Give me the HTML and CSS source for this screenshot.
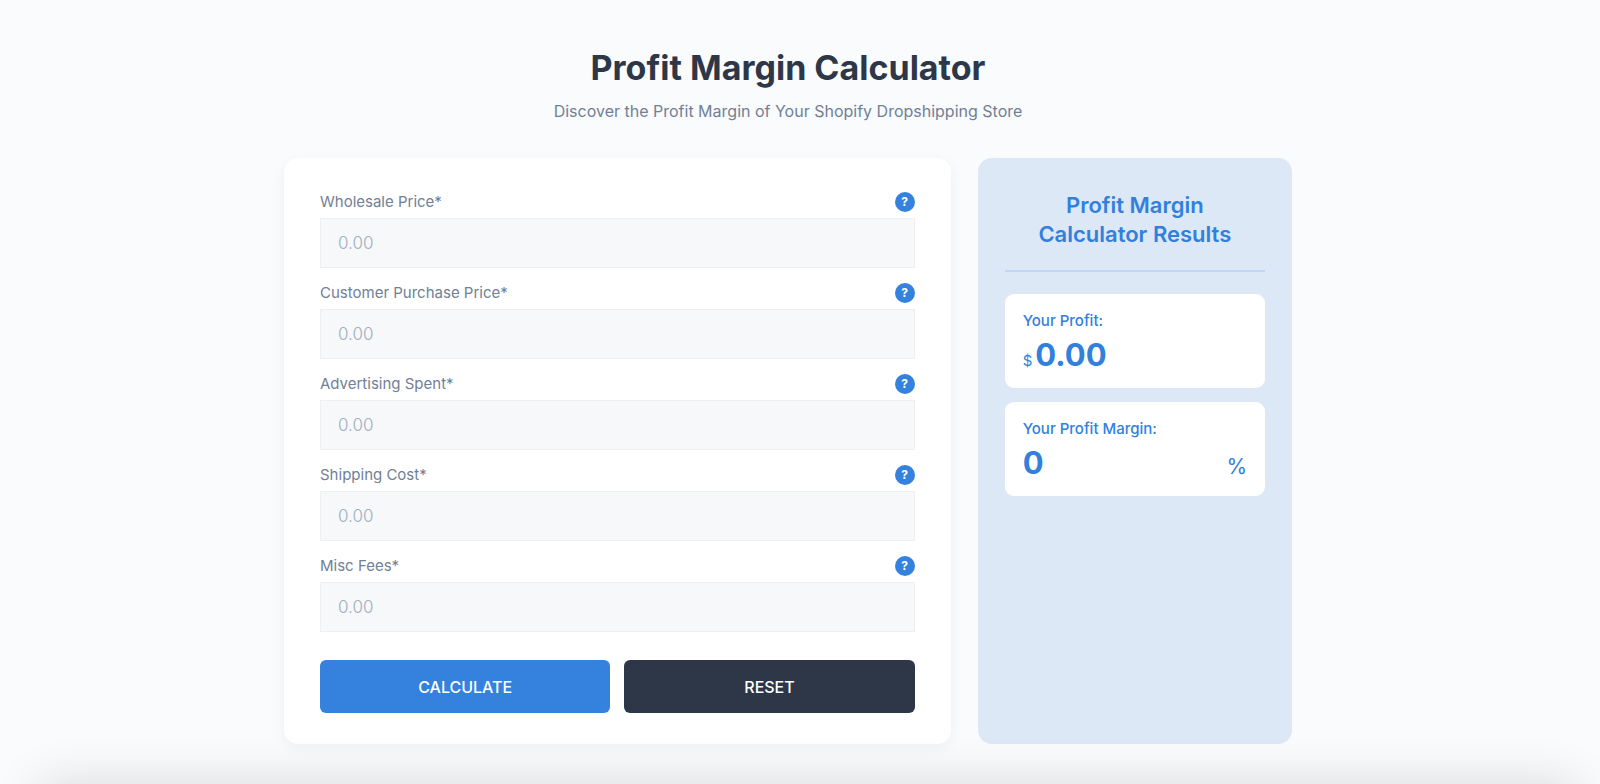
FILE: index.html
```html
<!DOCTYPE html>
<html lang="en">
<head>
<meta charset="utf-8">
<meta name="viewport" content="width=device-width, initial-scale=1">
<title>Profit Margin Calculator</title>
<link rel="stylesheet" href="styles.css">
</head>
<body>
<main class="page">
  <header class="intro">
    <h1 class="title">Profit Margin Calculator</h1>
    <p class="subtitle">Discover the Profit Margin of Your Shopify Dropshipping Store</p>
  </header>
  <div class="calculator">
    <form class="form-card">
      <div class="field">
        <div class="field-head"><label for="wholesale">Wholesale Price*</label><button type="button" class="help">?</button></div>
        <input class="amount" id="wholesale" type="text" inputmode="decimal" placeholder="0.00">
      </div>
      <div class="field">
        <div class="field-head"><label for="purchase">Customer Purchase Price*</label><button type="button" class="help">?</button></div>
        <input class="amount" id="purchase" type="text" inputmode="decimal" placeholder="0.00">
      </div>
      <div class="field">
        <div class="field-head"><label for="advertising">Advertising Spent*</label><button type="button" class="help">?</button></div>
        <input class="amount" id="advertising" type="text" inputmode="decimal" placeholder="0.00">
      </div>
      <div class="field">
        <div class="field-head"><label for="shipping">Shipping Cost*</label><button type="button" class="help">?</button></div>
        <input class="amount" id="shipping" type="text" inputmode="decimal" placeholder="0.00">
      </div>
      <div class="field">
        <div class="field-head"><label for="fees">Misc Fees*</label><button type="button" class="help">?</button></div>
        <input class="amount" id="fees" type="text" inputmode="decimal" placeholder="0.00">
      </div>
      <div class="actions">
        <button type="button" class="button button-primary">CALCULATE</button>
        <button type="reset" class="button button-dark">RESET</button>
      </div>
    </form>
    <section class="results">
      <h2 class="results-title">Profit Margin Calculator Results</h2>
      <div class="result">
        <h3 class="result-label">Your Profit:</h3>
        <p class="result-value"><span class="currency">$</span><output class="number">0.00</output></p>
      </div>
      <div class="result">
        <h3 class="result-label">Your Profit Margin:</h3>
        <p class="result-value result-split"><output class="number">0</output><span class="percent">%</span></p>
      </div>
    </section>
  </div>
</main>
</body>
</html>
```

FILE: styles.css
```css
* {
  box-sizing: border-box;
}

body {
  margin: 0;
  background: #f9fbfd;
  color: #2d3748;
  font-family: Inter, "Liberation Sans", sans-serif;
}

h1, h2, h3, p {
  margin: 0;
}

.page {
  position: relative;
  min-height: 100vh;
  padding: 44px 24px 40px 0;
  overflow: hidden;
}

.page::after {
  content: "";
  position: absolute;
  top: 100%;
  left: 40px;
  right: 24px;
  height: 60px;
  box-shadow: 0 0 50px rgba(0, 0, 0, 0.14);
}

.intro {
  text-align: center;
}

.title {
  font-size: 34px;
  line-height: 48px;
  font-weight: 700;
}

.subtitle {
  margin-top: 7px;
  color: #718096;
  font-size: 16px;
  line-height: 24px;
}

.calculator {
  display: grid;
  grid-template-columns: 666fr 314fr;
  gap: 27px;
  max-width: 1008px;
  margin: 35px auto 0;
}

.form-card {
  display: flex;
  flex-direction: column;
  gap: 15px;
  padding: 34px 36px 31px;
  border-radius: 14px;
  background: #fff;
  box-shadow: 0 4px 14px rgba(45, 55, 72, 0.05);
}

.field-head {
  display: flex;
  align-items: center;
  justify-content: space-between;
  margin-bottom: 6px;
  color: #718096;
  font-size: 15px;
  line-height: 20px;
}

.help {
  width: 20px;
  height: 20px;
  padding: 0;
  border: 0;
  border-radius: 50%;
  background: #3482dd;
  color: #fff;
  font: 700 12px/20px Inter, sans-serif;
}

.amount {
  display: block;
  width: 100%;
  height: 50px;
  padding: 0 17px;
  border: 1px solid #edeff1;
  border-radius: 0;
  background: #f7f8fa;
  color: #2d3748;
  font: 300 17px Inter, sans-serif;
}

.amount::placeholder {
  color: #a0aec0;
  opacity: 1;
}

.actions {
  display: grid;
  grid-template-columns: 1fr 1fr;
  gap: 14px;
  margin-top: 13px;
}

.button {
  height: 53px;
  border: 0;
  border-radius: 6px;
  color: #fff;
  font: 500 16px Inter, sans-serif;
}

.button-primary {
  background: #3482dd;
}

.button-dark {
  background: #2d3748;
}

.results {
  padding: 33px 27px;
  border-radius: 14px;
  background: #dce8f6;
  color: #3180de;
}

.results-title {
  margin-bottom: 22px;
  padding: 0 27px 21px;
  border-bottom: 2px solid #c1d7f1;
  font-size: 22px;
  line-height: 29px;
  font-weight: 600;
  text-align: center;
}

.result {
  padding: 17px 18px 13px;
  border-radius: 9px;
  background: #fff;
}

.result + .result {
  margin-top: 14px;
}

.result-label {
  font-size: 15px;
  line-height: 20px;
  font-weight: 500;
}

.result-value {
  display: flex;
  align-items: baseline;
  gap: 3px;
  margin-top: 4px;
}

.result-split {
  justify-content: space-between;
}

.number {
  font-size: 31px;
  line-height: 40px;
  font-weight: 700;
}

.currency {
  font-size: 15px;
}

.percent {
  font-size: 21px;
}
```
